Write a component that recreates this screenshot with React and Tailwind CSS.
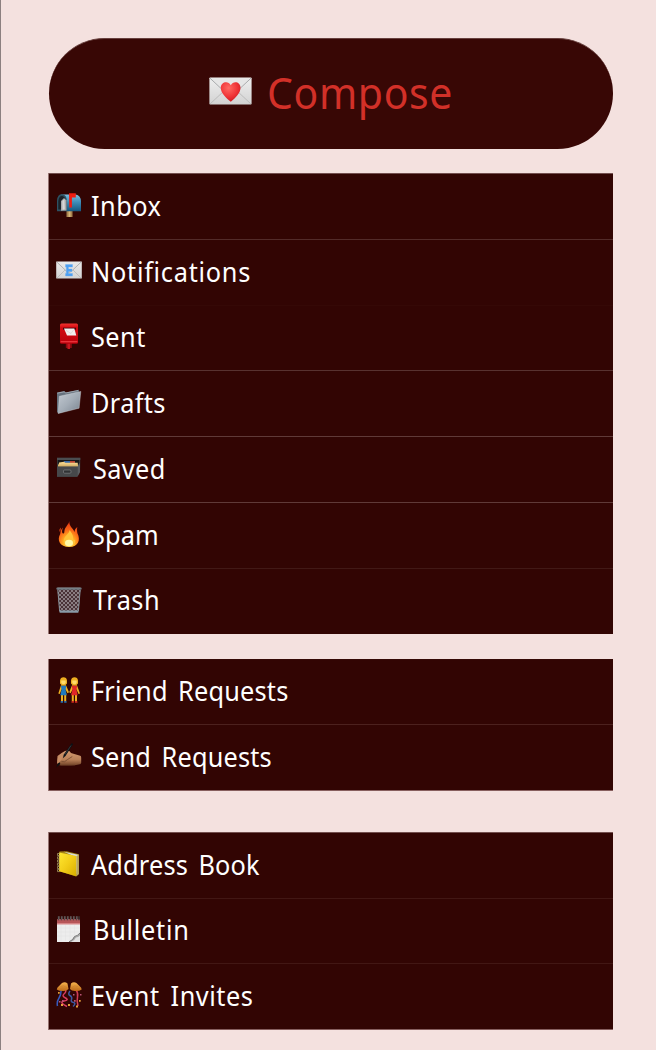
import React from 'react';

const Svg = ({ children }) => (
  <svg viewBox="0 0 26 26" className="-mt-[2px] h-[26px] w-[26px] shrink-0">{children}</svg>
);

const Envelope = ({ id, children, className }) => (
  <svg viewBox="0 0 43 28" className={className}>
    <defs>
      <linearGradient id={id} x1="0" y1="0" x2="0" y2="1">
        <stop offset="0" stopColor="#efefef" />
        <stop offset="1" stopColor="#d2d2d2" />
      </linearGradient>
    </defs>
    <rect x=".4" y=".4" width="42.2" height="27.2" rx=".8" fill={`url(#${id})`} />
    <path d="M1 27 16 13M42 27 27 13" stroke="#bcbcbc" strokeWidth="1" fill="none" />
    <path d="M1 1.2 18 17q3.500 3 7 0L42 1.200" stroke="#a9abad" strokeWidth="1" fill="#e6e6e6" />
    {children}
  </svg>
);

const LoveLetter = () => (
  <Envelope id="love" className="h-[28px] w-[43px] shrink-0">
    <defs>
      <radialGradient id="heart" cx=".4" cy=".3" r=".75">
        <stop offset="0" stopColor="#ff6a63" />
        <stop offset=".6" stopColor="#ef3336" />
        <stop offset="1" stopColor="#c9171f" />
      </radialGradient>
    </defs>
    <path d="M21.800 24.800C17 20.800 11.800 16 11.800 10.700c0-6 7.600-7.600 10-2.400 2.400-5.200 9.700-3.600 9.700 2.400 0 5.300-5 10.100-9.700 14.100Z" fill="url(#heart)" />
  </Envelope>
);

const Mailbox = () => (
  <Svg>
    <defs>
      <linearGradient id="box" x1="0" y1="0" x2="0" y2="1">
        <stop offset="0" stopColor="#7dbfe0" />
        <stop offset=".45" stopColor="#3f8db8" />
        <stop offset="1" stopColor="#15567e" />
      </linearGradient>
    </defs>
    <path d="M10.500 17.500h6v7.500h-6z" fill="#a98450" />
    <path d="M12.500 19h2v6h-2z" fill="#d6b57b" />
    <path d="M5 2.500h14.500q5.500 1 5.500 7v9.800H10V9Z" fill="url(#box)" />
    <path d="M1 19.200V8.500q.5-6.500 5-6.500 4.500.5 5 7v10.200Z" fill="#2d5263" />
    <path d="M2.300 17.500V9q.6-5 3.700-5 3.300.6 3.600 5v8.500Z" fill="#1b2228" />
    <path d="M5 18.700V9l3-3 2.500 2.500v10Z" fill="#a9aaac" />
    <path d="m6.300 9 2.200-2 .3 10.500-2.300.3Z" fill="#d8d8d8" />
    <path d="M13 1.300h6.800v4.200h-3.900v10h-2.600Z" fill="#f01d12" />
  </Svg>
);

const EmailLetter = () => (
  <Svg>
    <defs>
      <linearGradient id="mail" x1="0" y1="0" x2="0" y2="1">
        <stop offset="0" stopColor="#e9e9e9" />
        <stop offset="1" stopColor="#d3d3d3" />
      </linearGradient>
    </defs>
    <rect x=".2" y="3.400" width="25.600" height="17" rx=".5" fill="url(#mail)" />
    <path d="m1 20 8-8m16 8-8-8" stroke="#b5b5b5" strokeWidth=".8" />
    <path d="m.8 4 10 9.500q2.200 1.800 4.400 0L25.200 4" stroke="#aaa" strokeWidth=".9" fill="none" />
    <path d="M9.500 6.500h7v2.600h-4v1.900h3.500v2.400h-3.500v2.100h4V18h-7v-2.500h.8V9.100h-.8Z" fill="#4c9ff2" stroke="#6eaff0" strokeWidth=".4" />
  </Svg>
);

const Postbox = () => (
  <Svg>
    <defs>
      <linearGradient id="post" x1="0" y1="0" x2="0" y2="1">
        <stop offset="0" stopColor="#f2332f" />
        <stop offset=".2" stopColor="#d40b12" />
        <stop offset="1" stopColor="#b9000b" />
      </linearGradient>
    </defs>
    <path d="M9.800 19h6v6h-6z" fill="#8c0a10" />
    <path d="M11.500 20h2.500v6h-2.500z" fill="#c71720" />
    <rect x="4" y=".5" width="18" height="20.300" rx="1.500" fill="url(#post)" />
    <path d="M4.600 18h16.800v1.400H4.600z" fill="#e8343a" />
    <path d="M7 4.700h13v2H7z" fill="#450308" />
    <path d="M8 5.600h10.300l2 6.800H11Z" fill="#f1eeee" />
    <path d="m10 7.300 5 3.200 2.500-3.500" fill="none" stroke="#d8c8c8" strokeWidth=".6" />
  </Svg>
);

const Folder = () => (
  <Svg>
    <defs>
      <linearGradient id="folder" x1="0" y1="0" x2="1" y2="1">
        <stop offset="0" stopColor="#c3cad2" />
        <stop offset=".5" stopColor="#a4adb7" />
        <stop offset="1" stopColor="#78828e" />
      </linearGradient>
    </defs>
    <path d="M1 3.500 8.500 2l1.300 1.500L23 .8l-1 17L2.500 24.500 1 23Z" fill="#66717d" />
    <path d="m1.300 4.200 7-1.400L9.500 4 22 1.500" stroke="#b5bdc5" strokeWidth=".7" fill="none" />
    <path d="m3.300 7.300 21.500-4.900-1.700 16.800-20.900 5.300Z" fill="url(#folder)" stroke="#d1d7dc" strokeWidth=".4" />
  </Svg>
);

const CardBox = () => (
  <Svg>
    <path d="M1 2.800h23.300l-.2 14.200-3 4.800H1Z" fill="#353637" />
    <path d="M1 2.800h23.300v2.200H1Z" fill="#4a4d50" />
    <path d="M2 5h21v4.500H2z" fill="#18191a" />
    <path d="M8 6h6v2.500H8z" fill="#386aa8" />
    <path d="M14 6h5v2.500h-5z" fill="#bd4431" />
    <path d="m3 7.500 5-.8 1.300 1h12.500v3H2.500Z" fill="#efcf87" />
    <path d="M2 9.500h20v2.300H2z" fill="#d9b66d" />
    <path d="M1 11.500h20.500v10.300H1Z" fill="#46484a" />
    <path d="m21.500 11.500 2.500-4v9.500l-2.500 4.800Z" fill="#5b5d60" />
    <rect x="7.500" y="15" width="7.500" height="3.200" rx="1" fill="#303234" stroke="#8b8d8f" strokeWidth=".6" />
  </Svg>
);

const Fire = () => (
  <Svg>
    <defs>
      <radialGradient id="fire" cx=".5" cy=".88" r=".85">
        <stop offset="0" stopColor="#ffe35a" />
        <stop offset=".35" stopColor="#ffad20" />
        <stop offset=".65" stopColor="#fa6416" />
        <stop offset="1" stopColor="#e33313" />
      </radialGradient>
    </defs>
    <path d="M13.500 0c-.8 3.500-4.500 6-5 9.500-.3 1.800-.1 3.300-1.300 3C5.500 12 6 9 7 6.500 4.500 9 4.500 11 4.200 13c-3.500 6-.5 13 9 13 9.500 0 11.500-7.500 8.300-13.500-.5-2-.6-4.500-.2-6.500-2 1.500-2.600 3-2.800 5C17 7 12.500 5 13.500 0Z" fill="url(#fire)" />
    <path d="M5 6.500C3.200 8 3 9.500 4 11c.7-1 .5-2.500 1-4.500Z" fill="#e64818" />
    <path d="M13.500 9c.3 3-4.500 5.500-5.500 9-1.300 4 1.300 7.200 5.300 7.200s6.600-2.700 5.700-6.500c-1.500.8-1.800 0-1.800-2C17 13 14.800 11 13.500 9Z" fill="#ffc339" />
    <ellipse cx="13" cy="22" rx="4" ry="3.300" fill="#fff9a7" />
  </Svg>
);

const Wastebasket = () => (
  <Svg>
    <defs>
      <pattern id="mesh" width="4" height="4" patternUnits="userSpaceOnUse">
        <path d="m0 0 4 4M4 0 0 4" stroke="#92878a" strokeWidth=".9" />
      </pattern>
    </defs>
    <path d="M1.500 2h23l-2 22.500h-19Z" fill="#4a3337" />
    <path d="M1.500 2h23l-2 22.500h-19Z" fill="url(#mesh)" />
    <path d="m1.800 3 1.800 21M24.200 3l-1.800 21" stroke="#89969f" strokeWidth=".9" />
    <path d="M3.300 23.500h19.400l-.4 2.200H3.700Z" fill="#899ba8" />
    <rect x=".3" y=".5" width="25.400" height="2.200" rx="1" fill="#677078" />
    <path d="M1.500 1h23" stroke="#a4adb3" strokeWidth=".5" />
  </Svg>
);

const Friends = () => (
  <Svg>
    <g fill="#eeb021">
      <path d="M4 6.500V3.500q.5-3.300 3.500-3.300T11 3.500v3l-1.500 1.500h-4ZM15 6.500V3.500q.5-3.300 3.500-3.300T22 3.500v3L20.500 8h-4Z" />
      <path d="M5 8.300h5l3 7-1.500.9L9.500 12.500h-4L3.800 17l-1.500-.6ZM16 8.300h5l3 8.100-1.500.6-2-4.500h-4l-1.800 3.700-1.500-.9ZM5 16h2v8.300H5zM8.200 16h2v8.300h-2zM15.800 16h2v8.300h-2zM19 16h2v8.300h-2z" />
    </g>
    <path d="M5.300 3.500h4.400V6q-2.200 2.500-4.400 0ZM16.300 3.500h4.400V6q-2.200 2.500-4.400 0Z" fill="#ffdb6c" />
    <path d="M5 8.700h5.200l-.6 4 1.200 5.600H4.300l1.200-5.600Z" fill="#2179bd" />
    <path d="M15.900 8.700h5.200l-.6 4 1.200 5.600h-6.500l1.200-5.600Z" fill="#df2627" />
    <path d="M4.800 24H7v1.800H4.500zM8.200 24h2.200l.3 1.800H8.200z" fill="#2a6eaa" />
    <path d="M15.700 24h2.200v1.800h-2.500zM19 24h2.200l.3 1.800H19z" fill="#d12d22" />
  </Svg>
);

const WritingHand = () => (
  <Svg>
    <defs>
      <linearGradient id="hand" x1="0" y1="0" x2="0" y2="1">
        <stop offset="0" stopColor="#d49a71" />
        <stop offset=".6" stopColor="#b98058" />
        <stop offset="1" stopColor="#704126" />
      </linearGradient>
    </defs>
    <path d="M1 20.500 1.500 13Q6 9.500 9 8q4-1.500 6 2l9.200 2.800q1 .2 1 2v5q0 1.500-2.500 1.700-4.700 1.300-9.700 1H4Z" fill="url(#hand)" />
    <path d="M5.500 18.500q3 1.500 5.800-1.800l5-3.200M5 21.800h14" stroke="#754a30" strokeWidth=".8" fill="none" />
    <path d="M15.300.5q1.500-.7 1.600 1L9.500 13l-2.600 2.300.8-3.500Z" fill="#0d1115" />
    <path d="m15 2.500-6 9" stroke="#4b5256" strokeWidth=".6" />
    <path d="m.2 24.500 1.500-4L4 19.300l.2 2Z" fill="#111" />
    <path d="m2 14 5-2.500-1.500 5L3 19.500l-2 1Z" fill="#c88d65" />
  </Svg>
);

const Ledger = () => (
  <Svg>
    <defs>
      <linearGradient id="book" x1="0" y1="0" x2="1" y2="1">
        <stop offset="0" stopColor="#ffe832" />
        <stop offset=".5" stopColor="#f2cd18" />
        <stop offset="1" stopColor="#d7ad00" />
      </linearGradient>
    </defs>
    <path d="m3.500.5 7-.3L23 3.300V23l-3 2.500L3 20Z" fill="#a78814" />
    <path d="M8 .8 22 3.800V22l-1.500 1.500-2-18Z" fill="#d6dce0" />
    <path d="M3 1.500 20.500 5v20.300L3 20.300Z" fill="url(#book)" />
    <path d="m20.500 5 2.300-1.500V23l-2.300 2.300Z" fill="#b6a664" />
    <path d="M3.800 2.500H1.500v2h2.300M3.800 5.800H1.500v2h2.300M3.800 9H1.500v2h2.300m0 1.300H1.500v2h2.300m0 1.200H1.500v2h2.300m0 1.100H1.500v2h2.300" stroke="#a69c63" strokeWidth=".8" fill="none" />
  </Svg>
);

const Calendar = () => (
  <Svg>
    <path d="M1 3h23v23H1z" fill="#ededed" />
    <path d="M1 3h23v5H1z" fill="#b65558" />
    <path d="M1 7h23v1.500H1z" fill="#d68486" />
    <path d="M1 12h23M1 16h23M1 20h18M5 9v16M9.500 9v16M14 9v16M18.500 9v11" stroke="#e3e3e3" strokeWidth=".5" />
    <path d="M24 17.500q-2.500 2.500-5 3-1.500.5-2.500 2.500-1 2.200-3.500 3h11Z" fill="#a8a8a8" />
    <path d="M24 19.500q-2 2-4 2-1 2.500-5 4.500h9Z" fill="#e2e2e2" />
    <path d="M24 17q-2.500 3-5.500 3.500-1 3.500-5.500 5.300" stroke="#777" strokeWidth="1" fill="none" />
    <path d="M2.500.2v4M5.500.2v4M8.500.2v4M11.500.2v4M14.500.2v4M17.500.2v4M20.500.2v4M23 .2v4" stroke="#3d3536" strokeWidth="1.500" />
    <path d="M3 .2v3.500M6 .2v3.500M9 .2v3.500M12 .2v3.500M15 .2v3.500M18 .2v3.500M21 .2v3.500" stroke="#a7a3a3" strokeWidth=".6" />
  </Svg>
);

const Confetti = () => (
  <Svg>
    <defs>
      <linearGradient id="ball" x1="0" y1="0" x2="0" y2="1">
        <stop offset="0" stopColor="#f6b34d" />
        <stop offset="1" stopColor="#bd6817" />
      </linearGradient>
    </defs>
    <g fill="none" strokeWidth="1.500">
      <path d="M5 7Q5.500 12 3 16T1.500 24" stroke="#3659bd" />
      <path d="M9.500 7q1 3-1.500 5t1.500 4-1.500 3 3 5.500" stroke="#d83c60" />
      <path d="M14 9q-2.500 3 0 4.500t1.500 4 2 3-.5 4" stroke="#3b58a2" />
      <path d="M19.500 7q3 4 2 8t.5 9" stroke="#cf3d55" />
    </g>
    <path d="M2 10h1.700v1.700H2zM5 22h2v2H5zM12 22h2v2h-2zM20 23.500h2v2h-2zM23 18h1.700v1.700H23z" fill="#e5a03b" />
    <path d="M6 18h1.700v1.700H6zM18 18h1.700v1.700H18zM24 12h1.500v1.500H24zM17 12h1.500v1.500H17zM3 19h1.500v1.500H3z" fill="#b85376" />
    <path d="M.8 7.500q0-2 2.200-3.500L6 1q3-1.500 5.500.5L12.500 7q-2 2.500-6 2-3.700 0-5.700-1.500ZM25.700 7.500q0-2-2.200-3.500L20.500 1q-3-1.500-5.500.5L14 7q2 2.500 6 2 3.700 0 5.700-1.500Z" fill="url(#ball)" />
    <path d="M4.500 4.500q3-2 7 1.500M22 4.500q-3-2-7 1.500M2 7.500q4-2.500 9-1M24.500 7.500q-4-2.500-9-1" stroke="#c57928" strokeWidth=".5" fill="none" />
  </Svg>
);

const groups = [
  {
    className: 'mt-[24px]',
    items: [
      { label: 'Inbox', icon: Mailbox, row: 'h-[66px] border-[#734f4e]', text: 'ml-[9px] tracking-[0.5px]' },
      { label: 'Notifications', icon: EmailLetter, row: 'h-[66px] border-[#532b29]', text: 'ml-[9px] tracking-[0.8px]' },
      { label: 'Sent', icon: Postbox, row: 'h-[65px] border-[#350906]', text: 'ml-[9px] tracking-[0.5px]' },
      { label: 'Drafts', icon: Folder, row: 'h-[66px] border-[#583230]', text: 'ml-[9px] tracking-[0.4px]' },
      { label: 'Saved', icon: CardBox, row: 'h-[66px] border-[#603a38]', text: 'ml-[11px] tracking-[0.4px]' },
      { label: 'Spam', icon: Fire, row: 'h-[66px] border-[#603a38]', text: 'ml-[9px] tracking-[0.1px]' },
      { label: 'Trash', icon: Wastebasket, row: 'h-[66px] border-[#421916]', text: 'ml-[11px] -mt-px tracking-[0.5px]' },
    ],
  },
  {
    className: 'mt-[25px]',
    items: [
      { label: 'Friend Requests', icon: Friends, row: 'h-[65px] border-[#350906]', text: 'ml-[9px] tracking-[0.2px] [word-spacing:4px]' },
      { label: 'Send Requests', icon: WritingHand, row: 'h-[67px] border-[#4c211e] border-b border-b-[#875f5e]', text: 'ml-[9px] tracking-[0.2px] [word-spacing:4px]' },
    ],
  },
  {
    className: 'mt-[41px]',
    items: [
      { label: 'Address Book', icon: Ledger, row: 'h-[66px] border-[#734f4e]', text: 'ml-[9px] tracking-[0.2px] [word-spacing:4px]' },
      { label: 'Bulletin', icon: Calendar, row: 'h-[65px] border-[#421714]', text: 'ml-[11px] tracking-[0.8px]' },
      { label: 'Event Invites', icon: Confetti, row: 'h-[67px] border-[#421714] border-b border-b-[#875f5e]', text: 'ml-[9px] tracking-[0.6px] [word-spacing:4px]' },
    ],
  },
];

const MenuItem = ({ item }) => {
  const Icon = item.icon;
  return (
    <li className={`flex items-center border-t pb-[2px] pl-[7px] ${item.row}`}>
      <Icon />
      <span className={`inline-block origin-left scale-x-[0.92] whitespace-pre text-[27.5px] leading-[32px] text-white ${item.text}`}>
        {item.label}
      </span>
    </li>
  );
};

export default function App() {
  return (
    <div className="h-[1050px] overflow-hidden border-l border-[#8c8080] bg-[#f4e1df] pl-[47px] pr-[43px] pt-[38px] font-['Noto_Sans',sans-serif]">
      <button className="ml-px flex h-[111px] w-[564px] items-center rounded-full border-t border-[#67403e] bg-[#380705] pl-[160px]">
        <span className="-mt-[6px]"><LoveLetter /></span>
        <span className="-mt-[4px] ml-[15px] inline-block origin-left scale-x-[0.92] text-[44.5px] leading-[50px] tracking-[0.7px] text-[#d23028]">
          Compose
        </span>
      </button>

      {groups.map((group, i) => (
        <ul key={i} className={`border-l border-l-[#967472] bg-[#320503] ${group.className}`}>
          {group.items.map((item) => (
            <MenuItem key={item.label} item={item} />
          ))}
        </ul>
      ))}
    </div>
  );
}
